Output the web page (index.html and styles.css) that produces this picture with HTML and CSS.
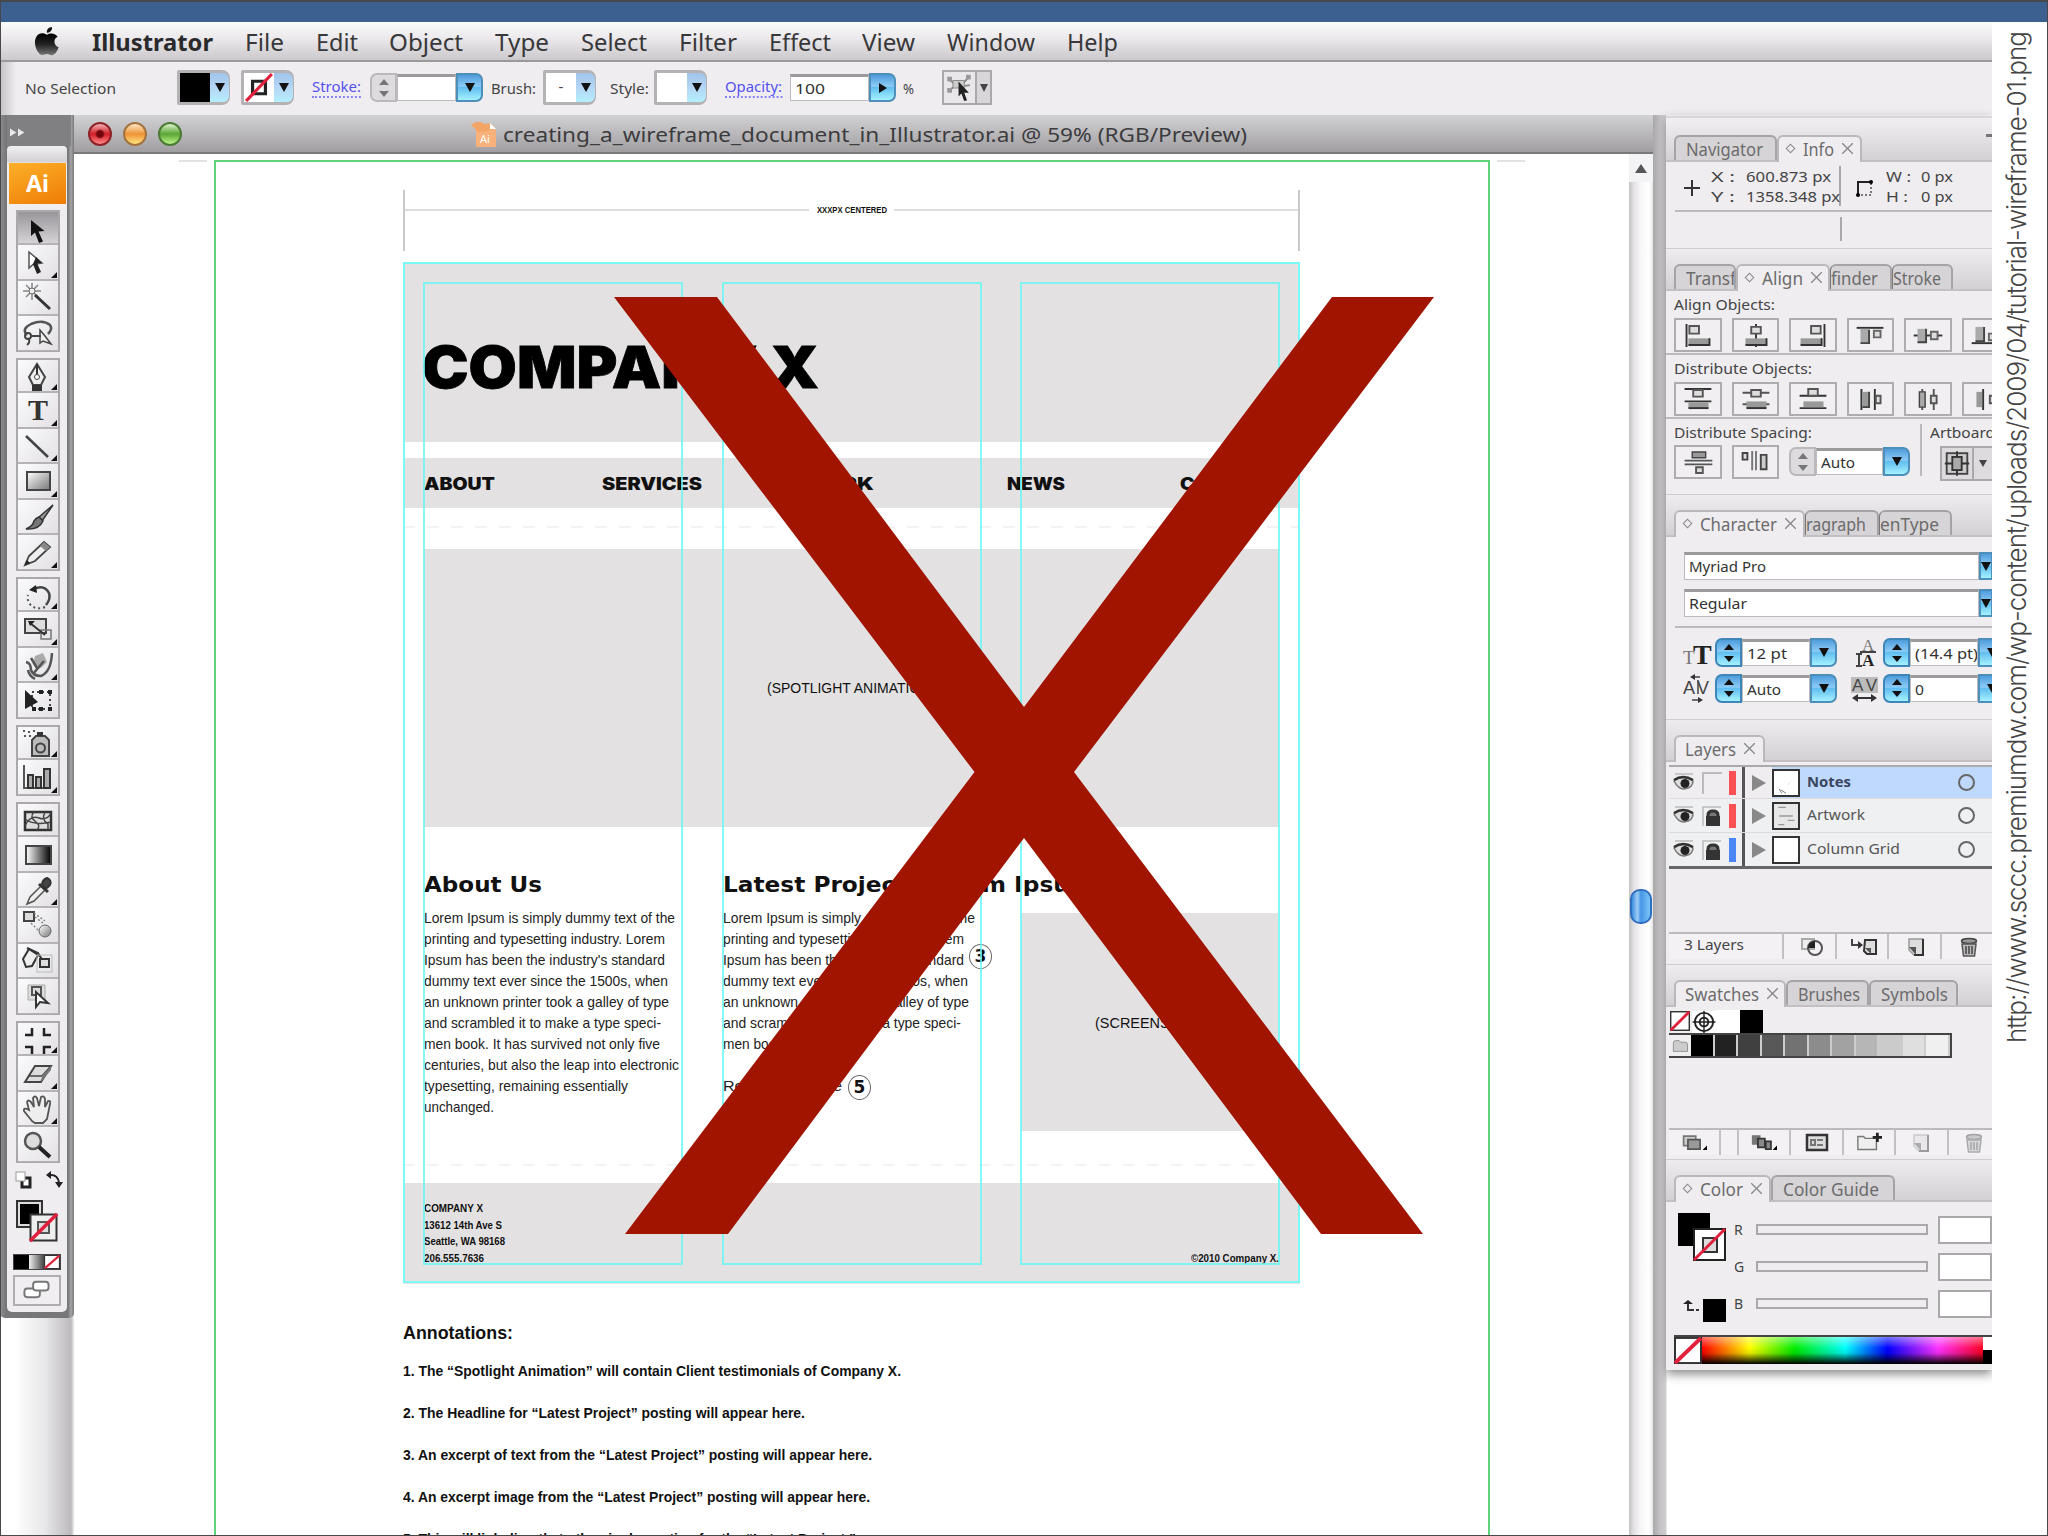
FILE: index.html
```html
<!DOCTYPE html>
<html lang="en-us">
<head>
  <meta charset="utf-8">
  <title>creating_a_wireframe_document_in_Illustrator.ai</title>
  <link rel="stylesheet" href="styles.css">
</head>
<body>
  <svg class="defs">
    <defs>
      <linearGradient id="metal" x1="0" y1="0" x2="1" y2="1"><stop offset="0" stop-color="#fff"/><stop offset="1" stop-color="#777"/></linearGradient>
      <linearGradient id="fade" x1="0" y1="0" x2="1" y2="0"><stop offset="0" stop-color="#fff"/><stop offset="1" stop-color="#000"/></linearGradient>
      <linearGradient id="apple" x1="0" y1="0" x2="0" y2="1"><stop offset="0" stop-color="#000"/><stop offset=".5" stop-color="#222"/><stop offset="1" stop-color="#777"/></linearGradient>
      <symbol id="none" viewBox="0 0 28 28" preserveAspectRatio="none"><path d="M8 8H20V20H8Z" fill="#fff" stroke="#222" stroke-width="3"/><path d="M2 27L26 1" stroke="#e0203c" stroke-width="3"/></symbol>
      <symbol id="slash" viewBox="0 0 28 28" preserveAspectRatio="none"><rect x="1" y="1" width="26" height="26" fill="#fff" stroke="#333" stroke-width="2"/><path d="M1 27L27 1" stroke="#e0203c" stroke-width="4"/></symbol>
      <symbol id="eye" viewBox="0 0 24 20"><path d="M2 1H20" stroke="#bbb" stroke-width="1.500"/><path d="M1 8Q10 1 20 8Q20 15 11 16Q5 16 1 8Z" fill="#ddd" stroke="#777" stroke-width="1.500"/><path d="M1 7Q10 1 20 7" fill="none" stroke="#333" stroke-width="2.500"/><circle cx="12" cy="10.500" r="4.500" fill="#222"/></symbol>
      <symbol id="lock" viewBox="0 0 20 22"><path d="M1 21V2H19" fill="none" stroke="#bbb" stroke-width="1.500"/><path d="M6 12V10Q6 6 11 6Q16 6 16 10V12" fill="#777" stroke="#333" stroke-width="3"/><rect x="4" y="11" width="14" height="10" fill="#333"/></symbol>
      <symbol id="page" viewBox="0 0 20 22"><path d="M3 3H17V19H8L3 14Z" fill="#ddd" stroke="#999" stroke-width="1.500"/><path d="M17 3V19H8" fill="none" stroke="#333" stroke-width="2"/><path d="M3 11H10V19Z" fill="#555"/></symbol>
      <symbol id="trash" viewBox="0 0 20 22"><ellipse cx="10" cy="5" rx="7.500" ry="2.500" fill="#999" stroke="#444" stroke-width="1.500"/><path d="M3 8H17L15.500 20H4.500Z" fill="#bbb" stroke="#555" stroke-width="1.500"/><path d="M7 10V18M10 10V18M13 10V18" stroke="#444" stroke-width="1.500"/></symbol>
    </defs>
  </svg>

  <div class="desktop"></div>
  <div class="main">
    <div class="app">
      <div class="menubar">
        <svg class="apple" viewBox="0 0 28 30"><path d="M14 8C11 6 6 5 3 10C-1 17 4 28 9 29C11 29 12 28 14 28C16 28 18 30 20 29C23 28 25 24 26 21C21 19 20 12 25 10C22 6 17 6 14 8Z" fill="url(#apple)"/><path d="M14 6C13 3 16 0 19 0C20 3 17 6 14 6Z" fill="#111"/></svg>
        <div class="menus">
          <b data-w="121">Illustrator</b><span data-w="39">File</span><span data-w="42">Edit</span><span data-w="74">Object</span><span data-w="54">Type</span><span data-w="66">Select</span><span data-w="58">Filter</span><span data-w="62">Effect</span><span data-w="53">View</span><span data-w="88">Window</span><span data-w="51">Help</span>
        </div>
      </div>

      <div class="controlbar">
        <span class="selection" data-w="91">No Selection</span>
        <div class="well"><i class="paint black"></i><i class="pop down"></i></div>
        <div class="well second"><svg class="paint"><use href="#none"/></svg><i class="pop down"></i></div>
        <a class="stroke-link" data-w="49">Stroke:</a>
        <div class="num"><i class="step gray"></i><i class="field"></i><i class="arrow down"></i></div>
        <span class="brush-label" data-w="45">Brush:</span>
        <div class="well brush"><i class="paint">-</i><i class="pop down"></i></div>
        <span class="style-label" data-w="39">Style:</span>
        <div class="well style"><i class="paint"></i><i class="pop down"></i></div>
        <a class="opacity-link" data-w="57">Opacity:</a>
        <div class="num opacity"><i class="field"><span data-w="30">100</span></i><i class="arrow right"></i></div>
        <span class="percent" data-w="11">%</span>
        <div class="selector">
          <svg viewBox="0 0 32 33"><path d="M4 7L10 12M26 5L20 12M4 20L10 16M27 14L20 15" stroke="#888" stroke-width="2"/><rect x="9" y="9" width="12" height="8" fill="#ccc" stroke="#888"/><path d="M3 5h5v5H3zM23 3h5v5h-5zM3 17h5v5H3z" fill="#999"/><path d="M15 10V26L18 23L21 31L24 30L21 22H26Z" fill="#222"/></svg>
          <i class="down"></i>
        </div>
      </div>

      <div class="work">
        <div class="toolcol">
          <div class="toolbox">
            <div class="toolhead"><svg viewBox="0 0 20 12"><path d="M0 1L8 6L0 11ZM10 1L18 6L10 11Z" fill="#e8e8e8"/></svg></div>
            <div class="toolbody">
              <div class="ai"><span data-w="23">Ai</span></div>
              <div class="tools">
                <div class="group">
                  <i class="tool on"><svg viewBox="0 0 42 35"><path d="M14 8V24L18 20.500L22 31L26 29.500L21.500 19.500L27.500 19Z" fill="#111"/></svg></i>
                  <i class="tool more"><svg viewBox="0 0 42 35"><path d="M12 7V23L16 19.500L25 18Z" fill="#fff" stroke="#555" stroke-width="1.500"/><path d="M16 19L20 29L24 27L20 18L25 18L19 12" fill="#222"/></svg></i>
                  <i class="tool"><svg viewBox="0 0 42 35"><path d="M15 2V19M6 10H24M9 4L21 16M9 16L21 4" stroke="#888" stroke-width="1.500"/><circle cx="15" cy="10" r="3" fill="#eee" stroke="#666"/><path d="M18 14L33 28" stroke="#333" stroke-width="3"/></svg></i>
                  <i class="tool"><svg viewBox="0 0 42 35"><path d="M10 19Q4 13 14 8Q26 3 33 9Q36 13 31 18" fill="none" stroke="#555" stroke-width="2.500"/><circle cx="11" cy="20" r="3" fill="none" stroke="#444" stroke-width="2"/><path d="M11 22Q14 26 10 29" fill="none" stroke="#444" stroke-width="2"/><path d="M23 14V27L26 25L34 28L28 20Z" fill="#eee" stroke="#444" stroke-width="1.500"/><path d="M13 20H24" stroke="#444" stroke-width="2"/></svg></i>
                </div>
                <div class="group">
                  <i class="tool more"><svg viewBox="0 0 42 35"><path d="M20 4L28 17L24 25H16L12 17Z" fill="#eee" stroke="#444" stroke-width="2"/><path d="M20 4V16" stroke="#333" stroke-width="2"/><circle cx="20" cy="17" r="2.500" fill="#fff" stroke="#444"/><path d="M15 25H25V31H15Z" fill="#333"/></svg></i>
                  <i class="tool more letter">T</i>
                  <i class="tool more"><svg viewBox="0 0 42 35"><path d="M9 7L31 28" stroke="#444" stroke-width="2.500"/></svg></i>
                  <i class="tool more"><svg viewBox="0 0 42 35"><rect x="10" y="8" width="23" height="18" fill="url(#metal)" stroke="#444" stroke-width="2"/></svg></i>
                  <i class="tool"><svg viewBox="0 0 42 35"><path d="M36 5L22 17L25 21Z" fill="#999" stroke="#333" stroke-width="1.500"/><path d="M22 17L26 21Q22 30 9 29Q16 26 17 21Q19 18 22 17Z" fill="#777" stroke="#333" stroke-width="1.500"/></svg></i>
                  <i class="tool more"><svg viewBox="0 0 42 35"><path d="M8 30L12 21L27 7L33 12L18 26Z" fill="#eee" stroke="#444" stroke-width="1.800"/><path d="M27 7L33 12L29 16L23 11Z" fill="#888"/><path d="M8 30L10 25L13 28Z" fill="#222"/></svg></i>
                </div>
                <div class="group">
                  <i class="tool more"><svg viewBox="0 0 42 35"><path d="M17 10Q27 5 32 14Q34 20 29 26" fill="none" stroke="#444" stroke-width="2.500"/><path d="M28 28Q18 32 12 24Q10 20 11 16" fill="none" stroke="#555" stroke-width="2" stroke-dasharray="2 3"/><path d="M12 11L19 6L20 14Z" fill="#222"/></svg></i>
                  <i class="tool more"><svg viewBox="0 0 42 35"><rect x="8" y="7" width="21" height="14" fill="#ddd" stroke="#444" stroke-width="2"/><path d="M24 18h10v9H24z" fill="none" stroke="#777" stroke-width="1.500"/><path d="M13 11L28 23" stroke="#333" stroke-width="2"/><path d="M11 9H18L13 14Z" fill="#222"/></svg></i>
                  <i class="tool more"><svg viewBox="0 0 42 35"><path d="M18 8L26 5L30 14L24 20L16 16Z" fill="#aaa"/><path d="M9 14Q14 15 14 22Q16 28 24 28Q34 24 35 5M11 22Q12 28 18 31M16 26L27 13M14 10L20 20" fill="none" stroke="#555" stroke-width="2.500"/></svg></i>
                  <i class="tool"><svg viewBox="0 0 42 35"><path d="M15 9H33V26H15Z" fill="none" stroke="#444" stroke-width="2" stroke-dasharray="2 3"/><path d="M8 7V26L21 19Z" fill="#222"/><path d="M31 7h4v4h-4zM31 24h4v4h-4zM15 24h4v4h-4zM22 7h4v4h-4zM22 24h4v4h-4z" fill="#222"/></svg></i>
                </div>
                <div class="group">
                  <i class="tool more"><svg viewBox="0 0 42 35"><path d="M15 13L19 9H28L32 13V29H15Z" fill="#bbb" stroke="#444" stroke-width="2"/><rect x="20" y="5" width="6" height="4" fill="#333"/><circle cx="23.500" cy="21" r="4.500" fill="none" stroke="#444" stroke-width="2"/><path d="M6 4h2M11 5h2M16 4h2M7 9h2M12 9h2" stroke="#555" stroke-width="2"/></svg></i>
                  <i class="tool more"><svg viewBox="0 0 42 35"><path d="M7 5V28H33" fill="none" stroke="#555" stroke-width="2"/><path d="M11 15h5v13h-5zM19 17h5v11h-5zM27 9h6v19h-6z" fill="#aaa" stroke="#333" stroke-width="2"/></svg></i>
                </div>
                <div class="group">
                  <i class="tool"><svg viewBox="0 0 42 35"><rect x="8" y="8" width="26" height="18" fill="#ddd" stroke="#333" stroke-width="2.500"/><path d="M8 22Q13 11 22 14Q30 17 34 9M17 8Q12 13 19 18Q24 22 20 26M28 8Q24 16 31 20V26M8 15Q18 22 34 18" fill="none" stroke="#444" stroke-width="1.500"/></svg></i>
                  <i class="tool"><svg viewBox="0 0 42 35"><rect x="9" y="9" width="25" height="18" fill="url(#fade)" stroke="#444" stroke-width="2"/></svg></i>
                  <i class="tool more"><svg viewBox="0 0 42 35"><path d="M10 31L13 24L24 13L28 17L17 28Z" fill="#eee" stroke="#555" stroke-width="1.500"/><path d="M22 11L31 19" stroke="#333" stroke-width="3"/><path d="M25 12Q25 7 30 5Q35 7 33 12Q30 16 28 15Z" fill="#444" stroke="#333" stroke-width="2"/></svg></i>
                  <i class="tool"><svg viewBox="0 0 42 35"><rect x="7" y="4" width="10" height="9" fill="#ddd" stroke="#444" stroke-width="2"/><path d="M17 5L28 13M18 9L26 15M14 15L23 24" stroke="#888" stroke-width="1.500" stroke-dasharray="2 2"/><ellipse cx="28" cy="23" rx="6" ry="6" fill="url(#metal)" stroke="#666"/></svg></i>
                  <i class="tool"><svg viewBox="0 0 42 35"><path d="M6 15L12 5L21 11L15 22L9 23Z" fill="#eee" stroke="#333" stroke-width="2"/><path d="M10 4L21 9L26 17" fill="none" stroke="#333" stroke-width="2"/><rect x="20" y="11" width="15" height="17" fill="none" stroke="#bbb"/><rect x="23" y="15" width="9" height="8" fill="#ddd" stroke="#333" stroke-width="2"/></svg></i>
                  <i class="tool"><svg viewBox="0 0 42 35"><path d="M11 6h17v15H11z" fill="#ddd" stroke="#aaa"/><rect x="15" y="8" width="9" height="8" fill="none" stroke="#555" stroke-width="2"/><path d="M19 13V28L23 23L31 24Z" fill="#fff" stroke="#333" stroke-width="2"/></svg></i>
                </div>
                <div class="group">
                  <i class="tool more"><svg viewBox="0 0 42 35"><path d="M15 5V12H8M27 5V12H34M15 31V24H8M27 31V24H34" fill="none" stroke="#222" stroke-width="2.500"/></svg></i>
                  <i class="tool more"><svg viewBox="0 0 42 35"><path d="M8 26L18 10H34L24 26Z" fill="#ddd" stroke="#444" stroke-width="2"/><path d="M11 20H25L34 10" fill="none" stroke="#444" stroke-width="1.500"/><path d="M25 20L34 10V14L24 26Z" fill="#777"/></svg></i>
                  <i class="tool more"><svg viewBox="0 0 42 35"><path d="M15 29L7 19Q6 15 12 18L10 10Q11 7 14 10L17 15L16 6Q18 3 20 6L22 14L24 5Q27 3 28 7V15L31 9Q34 8 33 12L30 27L26 31H18Z" fill="#eee" stroke="#555" stroke-width="1.800"/></svg></i>
                  <i class="tool"><svg viewBox="0 0 42 35"><circle cx="16" cy="14" r="8" fill="#ddd" stroke="#555" stroke-width="2.500"/><path d="M22 20L33 30" stroke="#222" stroke-width="4"/></svg></i>
                </div>
              </div>
              <div class="swaps">
                <svg viewBox="0 0 17 17"><path d="M7 7h8v9H7z" fill="#fff" stroke="#222" stroke-width="3"/><rect x="1" y="1" width="9" height="9" fill="#fff" stroke="#999"/></svg>
                <svg viewBox="0 0 17 17"><path d="M3 4Q12 3 13 12" fill="none" stroke="#222" stroke-width="2"/><path d="M0 4L5 0V8ZM9 11H17L13 17Z" fill="#222"/></svg>
              </div>
              <svg class="fillstroke" viewBox="0 0 42 42"><rect x="1" y="1" width="25" height="26" fill="#ddd" stroke="#333" stroke-width="2"/><rect x="4" y="4" width="19" height="20" fill="#000"/><rect x="14.500" y="14.500" width="26" height="26" fill="#eee" stroke="#333" stroke-width="2"/><rect x="22" y="22" width="11" height="11" fill="#ddd" stroke="#555" stroke-width="2"/><path d="M14 41L41 14" stroke="#e0203c" stroke-width="3.500"/></svg>
              <div class="modes"><i></i><i></i><svg><use href="#slash"/></svg></div>
              <div class="screenmode"><svg viewBox="0 0 42 28"><rect x="9" y="12" width="16" height="9" rx="3" fill="#fff" stroke="#777" stroke-width="2"/><rect x="18" y="5" width="16" height="9" rx="3" fill="#fff" stroke="#777" stroke-width="2"/></svg></div>
            </div>
          </div>
        </div>

        <div class="docwin">
          <div class="titlebar">
            <i class="light red"></i><i class="light amber"></i><i class="light green"></i>
            <svg class="docicon" viewBox="0 0 28 28"><path d="M6 5H20L26 10V27H6Z" fill="#f6b27a"/><path d="M1 5Q8 -1 14 4Q22 2 24 7L18 11L8 12Z" fill="#f2a566"/><path d="M20 3L26 9H20Z" fill="#fff"/><text x="10" y="23" font-size="11">Ai</text></svg>
            <span data-w="744">creating_a_wireframe_document_in_Illustrator.ai @ 59% (RGB/Preview)</span>
          </div>
          <div class="docbody">
            <div class="canvas">
              <div class="artboard">
                <div class="measure"><i></i><b data-w="70">XXXPX CENTERED</b><i></i></div>
                <div class="wireframe">
                  <div class="wf-header"><h1 data-w="397">COMPANY X</h1></div>
                  <div class="wf-nav"><b data-w="71">ABOUT</b><b data-w="100">SERVICES</b><b data-w="72">WORK</b><b data-w="58">NEWS</b><b data-w="99">CONTACT</b></div>
                  <div class="wf-rule"></div>
                  <div class="wf-spot"><span data-w="168">(SPOTLIGHT ANIMATION)</span></div>
                  <div class="wf-content">
                    <div>
                      <h2 data-w="118">About Us</h2>
                      <p><span data-w="251">Lorem Ipsum is simply dummy text of the</span><span data-w="241">printing and typesetting industry. Lorem</span><span data-w="241">Ipsum has been the industry's standard</span><span data-w="244">dummy text ever since the 1500s, when</span><span data-w="245">an unknown printer took a galley of type</span><span data-w="237">and scrambled it to make a type speci-</span><span data-w="236">men book. It has survived not only five</span><span data-w="255">centuries, but also the leap into electronic</span><span data-w="204">typesetting, remaining essentially</span><span data-w="70">unchanged.</span></p>
                    </div>
                    <div>
                      <h2 data-w="371">Latest Project: Lorem Ipsum</h2>
                      <p><span data-w="252">Lorem Ipsum is simply dummy text of the</span><span data-w="241">printing and typesetting industry. Lorem</span><span data-w="241">Ipsum has been the industry's standard</span><span data-w="245">dummy text ever since the 1500s, when</span><span data-w="246">an unknown printer took a galley of type</span><span data-w="238">and scrambled it to make a type speci-</span><span data-w="64">men book.</span><span class="readmore" data-w="119">Read More Here</span></p>
                      <em class="note three">3</em><em class="note five">5</em>
                    </div>
                    <div class="wf-shot"><span data-w="110">(SCREENSHOT)</span></div>
                  </div>
                  <div class="wf-rule low"></div>
                  <div class="wf-footer">
                    <address><b data-w="59">COMPANY X</b><b data-w="78">13612 14th Ave S</b><b data-w="81">Seattle, WA 98168</b><b data-w="60">206.555.7636</b></address>
                    <b data-w="88">©2010 Company X.</b>
                  </div>
                  <div class="colgrid"><i></i><i></i><i></i></div>
                </div>
                <div class="notes">
                  <h3 data-w="110">Annotations:</h3>
                  <b data-w="498">1. The “Spotlight Animation” will contain Client testimonials of Company X.</b>
                  <b data-w="402">2. The Headline for “Latest Project” posting will appear here.</b>
                  <b data-w="469">3. An excerpt of text from the “Latest Project” posting will appear here.</b>
                  <b data-w="467">4. An excerpt image from the “Latest Project” posting will appear here.</b>
                  <b data-w="453">5. This will link directly to the single posting for the “Latest Project.”</b>
                </div>
              </div>
            </div>
            <div class="scroll"><i class="up"></i><i class="thumb"></i></div>
          </div>
        </div>

        <div class="dock">
          <div class="panels">
            <section class="info">
              <div class="tabs"><span class="w103"><u data-w="77">Navigator</u></span><span class="on w85"><s></s><u data-w="31">Info</u><q></q></span><i class="min"></i></div>
              <div class="inforow">
                <svg class="plus" viewBox="0 0 16 16"><path d="M8 0V16M0 8H16" stroke="#333" stroke-width="2"/></svg>
                <div class="xy"><span data-w="24">X :</span><span data-w="85">600.873 px</span><span data-w="24">Y :</span><span data-w="94">1358.348 px</span></div>
                <svg class="whicon" viewBox="0 0 18 18"><path d="M2 17V3H15" fill="none" stroke="#222" stroke-width="2"/><path d="M15 4V16H4" fill="none" stroke="#777" stroke-width="2" stroke-dasharray="2 2"/><circle cx="2" cy="16" r="2"/><circle cx="15" cy="3" r="2"/></svg>
                <div class="xy wh"><span data-w="25">W :</span><span data-w="32">0 px</span><span data-w="22">H :</span><span data-w="32">0 px</span></div>
              </div>
              <div class="infomore"></div>
            </section>

            <section class="align">
              <div class="tabs"><span class="w62"><u data-w="50">Transf</u></span><span class="on w94"><s></s><u data-w="41">Align</u><q></q></span><span class="w62 cut"><u data-w="47">finder</u></span><span class="w61 cut"><u data-w="48">Stroke</u></span></div>
              <label data-w="101">Align Objects:</label>
              <div class="btns">
                <i><svg viewBox="0 0 46 32"><path d="M11 4V28" stroke="#333" stroke-width="2"/><path d="M14 6h10v8H14z" fill="#ddd" stroke="#555" stroke-width="2"/><path d="M13 19h22v7H13z" fill="#999"/><path d="M13 26H35V19" fill="none" stroke="#333" stroke-width="2"/></svg></i>
                <i><svg viewBox="0 0 46 32"><path d="M23 4V28" stroke="#333" stroke-width="2"/><path d="M18 7h10v7H18z" fill="#ddd" stroke="#555" stroke-width="2"/><path d="M12 19h22v7H12z" fill="#999"/><path d="M12 26H34V19" fill="none" stroke="#333" stroke-width="2"/></svg></i>
                <i><svg viewBox="0 0 46 32"><path d="M35 4V28" stroke="#333" stroke-width="2"/><path d="M21 6h10v8H21z" fill="#ddd" stroke="#555" stroke-width="2"/><path d="M10 19h22v7H10z" fill="#999"/><path d="M10 26H32V19" fill="none" stroke="#333" stroke-width="2"/></svg></i>
                <i><svg viewBox="0 0 46 32"><path d="M8 8H36" stroke="#333" stroke-width="2"/><path d="M12 9h9v15h-9z" fill="#aaa"/><path d="M12 24H21V10" fill="none" stroke="#444" stroke-width="2"/><path d="M26 11h7v7h-7z" fill="#ddd" stroke="#666" stroke-width="2"/></svg></i>
                <i><svg viewBox="0 0 46 32"><path d="M8 16H38" stroke="#333" stroke-width="2"/><path d="M12 9h9v14h-9z" fill="#aaa"/><path d="M12 23H21V9" fill="none" stroke="#444" stroke-width="2"/><path d="M26 12h7v8h-7z" fill="#ddd" stroke="#666" stroke-width="2"/></svg></i>
                <i><svg viewBox="0 0 46 32"><path d="M8 24H36" stroke="#333" stroke-width="2"/><path d="M12 7h9v15h-9z" fill="#aaa"/><path d="M12 22H21V7" fill="none" stroke="#444" stroke-width="2"/><path d="M26 14h7v7h-7z" fill="#ddd" stroke="#666" stroke-width="2"/></svg></i>
              </div>
              <label data-w="138">Distribute Objects:</label>
              <div class="btns">
                <i><svg viewBox="0 0 46 32"><path d="M9 5H37M9 18H37" stroke="#333" stroke-width="2"/><path d="M18 6h10v7H18z" fill="#ddd" stroke="#555" stroke-width="2"/><path d="M13 19h21v6H13z" fill="#999"/><path d="M13 25H34" stroke="#333" stroke-width="2"/></svg></i>
                <i><svg viewBox="0 0 46 32"><path d="M9 9H37M9 21H37" stroke="#555" stroke-width="2"/><path d="M18 6h10v7H18z" fill="#ddd" stroke="#555" stroke-width="2"/><path d="M13 18h21v7H13z" fill="#999"/><path d="M13 25H34" stroke="#333" stroke-width="2"/></svg></i>
                <i><svg viewBox="0 0 46 32"><path d="M9 12H37M9 25H37" stroke="#333" stroke-width="2"/><path d="M18 5h10v7H18z" fill="#ddd" stroke="#555" stroke-width="2"/><path d="M13 18h21v6H13z" fill="#999"/></svg></i>
                <i><svg viewBox="0 0 46 32"><path d="M13 5V27M27 5V27" stroke="#333" stroke-width="2"/><path d="M14 8h7v16h-7z" fill="#999"/><path d="M14 24H21V8" fill="none" stroke="#444" stroke-width="2"/><path d="M28 12h5v8h-5z" fill="#ddd" stroke="#555" stroke-width="2"/></svg></i>
                <i><svg viewBox="0 0 46 32"><path d="M17 5V27M29 5V27" stroke="#555" stroke-width="2"/><path d="M14 8h6v16h-6z" fill="#aaa" stroke="#444" stroke-width="1.500"/><path d="M26 12h6v8h-6z" fill="#ddd" stroke="#555" stroke-width="2"/></svg></i>
                <i><svg viewBox="0 0 46 32"><path d="M20 5V27M34 5V27" stroke="#333" stroke-width="2"/><path d="M13 8h6v16h-6z" fill="#999"/><path d="M27 12h5v8h-5z" fill="#ddd" stroke="#555" stroke-width="2"/></svg></i>
              </div>
              <div class="spacing">
                <div>
                  <label data-w="138">Distribute Spacing:</label>
                  <div class="btns">
                    <i><svg viewBox="0 0 46 32"><path d="M9 14H38M9 18H38" stroke="#555" stroke-width="2"/><path d="M17 5h14v6H17z" fill="#999" stroke="#444" stroke-width="1.500"/><path d="M21 21h7v6h-7z" fill="#ddd" stroke="#555" stroke-width="2"/></svg></i>
                    <i><svg viewBox="0 0 46 32"><path d="M19 4V24M23 4V24" stroke="#777" stroke-width="2"/><path d="M9 6h5v7H9z" fill="#ddd" stroke="#444" stroke-width="2"/><path d="M28 8h6v15h-6z" fill="#ccc" stroke="#444" stroke-width="2"/></svg></i>
                    <div class="num"><i class="step gray"></i><i class="field"><span data-w="34">Auto</span></i><i class="arrow down"></i></div>
                  </div>
                </div>
                <div class="toartboard">
                  <label data-w="65">Artboard</label>
                  <div><svg viewBox="0 0 32 32"><rect x="5" y="5" width="22" height="22" fill="#ccc" stroke="#444" stroke-width="2"/><rect x="11" y="9" width="10" height="14" fill="#aaa" stroke="#333" stroke-width="2"/><path d="M16 3V9M16 23V29M3 16H11M21 16H29" stroke="#333" stroke-width="2"/></svg><i class="down"></i></div>
                </div>
              </div>
            </section>

            <section class="character">
              <div class="tabs"><span class="on w131"><s></s><u data-w="77">Character</u><q></q></span><span class="w74 cut"><u data-w="60">ragraph</u></span><span class="w73 cut"><u data-w="59">enType</u></span></div>
              <div class="font"><i class="field"><span data-w="77">Myriad Pro</span></i><i class="arrow down"></i></div>
              <div class="font"><i class="field"><span data-w="58">Regular</span></i><i class="arrow down"></i></div>
              <div class="metrics">
                <svg viewBox="0 0 30 30"><text x="10" y="26" font-size="28" font-weight="bold">T</text><text x="0" y="26" font-size="19" fill="#777">T</text></svg>
                <div class="num"><i class="step"></i><i class="field"><span data-w="40">12 pt</span></i><i class="arrow down"></i></div>
                <svg viewBox="0 0 30 30"><text x="10" y="13" font-size="17" fill="#777">A</text><text x="10" y="28" font-size="17" font-weight="bold">A</text><path d="M7 16V28M4 16H10M4 28H10M8 14H24" stroke="#444" stroke-width="2"/></svg>
                <div class="num"><i class="step"></i><i class="field"><span data-w="63">(14.4 pt)</span></i><i class="arrow down"></i></div>
                <svg viewBox="0 0 30 30"><text class="sans" x="0" y="20" font-size="18" textLength="26">AV</text><path d="M15 6V20M10 3H17M9 26H17" stroke="#444" stroke-width="1.500"/><path d="M7 3l5-3v6zM20 26l-5-3v6z" fill="#333"/></svg>
                <div class="num"><i class="step"></i><i class="field"><span data-w="34">Auto</span></i><i class="arrow down"></i></div>
                <svg viewBox="0 0 30 30"><rect x="-1" y="3" width="27" height="16" fill="#bbb"/><text class="sans" x="0" y="17" font-size="17" textLength="25">AV</text><path d="M4 24H22" stroke="#333" stroke-width="2"/><path d="M0 24l6-4v8zM25 24l-6-4v8z" fill="#333"/></svg>
                <div class="num"><i class="step"></i><i class="field"><span data-w="9">0</span></i><i class="arrow down"></i></div>
              </div>
            </section>

            <section class="layers">
              <div class="tabs"><span class="on w91"><u data-w="51">Layers</u><q></q></span></div>
              <div class="layer on"><svg class="eye"><use href="#eye"/></svg><i class="nolock"></i><b></b><em></em><svg class="thumb" viewBox="0 0 28 28"><path d="M6 21L9 26M8 22L14 26" stroke="#666"/><path d="M16 16L20 12" stroke="#ddd"/></svg><span data-w="44">Notes</span><u></u></div>
              <div class="layer"><svg class="eye"><use href="#eye"/></svg><svg class="lock"><use href="#lock"/></svg><b></b><em></em><svg class="thumb" viewBox="0 0 28 28"><rect width="28" height="28" fill="#e8e8e8"/><path d="M5 4H14M6 14H22M16 19H24M5 24H12" stroke="#999" stroke-width="1.500"/></svg><span data-w="58">Artwork</span><u></u></div>
              <div class="layer blue"><svg class="eye"><use href="#eye"/></svg><svg class="lock"><use href="#lock"/></svg><b></b><em></em><svg class="thumb" viewBox="0 0 28 28"></svg><span data-w="93">Column Grid</span><u></u></div>
              <div class="foot">
                <span><u data-w="60">3 Layers</u></span>
                <i><svg viewBox="0 0 26 22"><rect x="3" y="3" width="12" height="10" fill="#eee" stroke="#aaa" stroke-width="2"/><circle cx="16" cy="12" r="7" fill="none" stroke="#555" stroke-width="2"/><path d="M9 12H16V5Q9 6 9 12Z" fill="#222"/></svg></i>
                <i><svg viewBox="0 0 26 22"><path d="M1 3V9H8" fill="none" stroke="#444" stroke-width="2"/><path d="M7 5L12 9L7 13Z" fill="#333"/><path d="M14 4H25V18H16L13 15Z" fill="#ddd" stroke="#333" stroke-width="2"/><path d="M14 12H20V18Z" fill="#555"/></svg></i>
                <i><svg><use href="#page"/></svg></i>
                <i><svg><use href="#trash"/></svg></i>
              </div>
            </section>

            <section class="swatches">
              <div class="tabs"><span class="on w112"><u data-w="74">Swatches</u><q></q></span><span class="w83"><u data-w="62">Brushes</u></span><span class="w89"><u data-w="67">Symbols</u></span></div>
              <div class="sw top"><svg><use href="#slash"/></svg><svg viewBox="0 0 24 23"><circle cx="12" cy="11.500" r="9.500" fill="none" stroke="#222" stroke-width="2"/><circle cx="12" cy="11.500" r="4.500" fill="none" stroke="#222" stroke-width="2"/><path d="M12 0V23M0 11.500H24" stroke="#222" stroke-width="1.500"/></svg><i class="white"></i><i class="g0"></i></div>
              <div class="sw grays"><svg viewBox="0 0 24 21"><path d="M4 7Q4 4 7 4H11L13 6H19Q21 6 21 9V17H4Z" fill="#ccc" stroke="#888"/></svg><i class="g0"></i><i class="g1"></i><i class="g2"></i><i class="g3"></i><i class="g4"></i><i class="g5"></i><i class="g6"></i><i class="g7"></i><i class="g8"></i><i class="g9"></i><i class="g10"></i></div>
              <div class="foot">
                <i class="first"><svg viewBox="0 0 30 22"><path d="M3 3h14v11H3z" fill="#ccc" stroke="#777" stroke-width="2"/><path d="M8 7h14v11H8z" fill="#999" stroke="#555" stroke-width="2"/><path d="M30 14V19H25Z"/></svg></i>
                <i class="gap"></i>
                <i><svg viewBox="0 0 30 22"><path d="M1 2h10v11H1z" fill="#777"/><path d="M8 6h8v10H8zM17 9h6v9h-6z" fill="#888" stroke="#333" stroke-width="2"/><path d="M30 14V19H25Z"/></svg></i>
                <i><svg viewBox="0 0 26 22"><rect x="3" y="3" width="20" height="15" fill="#ddd" stroke="#333" stroke-width="2.500"/><path d="M7 8h4v5H7zM13 8h6M13 13h6" fill="none" stroke="#777" stroke-width="2"/></svg></i>
                <i><svg viewBox="0 0 28 22"><path d="M2 18V4H8L10 6H22V18Z" fill="#eee" stroke="#777" stroke-width="1.500"/><path d="M23 0V10M18 5H28" stroke="#222" stroke-width="3"/></svg></i>
                <i class="dim"><svg><use href="#page"/></svg></i>
                <i class="dim"><svg><use href="#trash"/></svg></i>
              </div>
            </section>

            <section class="color">
              <div class="tabs"><span class="on w97"><s></s><u data-w="43">Color</u><q></q></span><span class="w124"><u data-w="96">Color Guide</u></span></div>
              <div class="mixer">
                <svg class="chips" viewBox="0 0 50 112"><rect x="0" y="0" width="32" height="33" fill="#000"/><rect x="16" y="16" width="31" height="31" fill="#fff" stroke="#222" stroke-width="2"/><rect x="25" y="25" width="14" height="14" fill="#ddd" stroke="#333" stroke-width="2"/><path d="M16 47L47 16" stroke="#e0203c" stroke-width="3"/><rect x="25" y="86" width="23" height="23" fill="#000"/><path d="M10 89V97H16M18 97H21" fill="none" stroke="#333" stroke-width="2"/><path d="M5 91L10 87L15 91Z" fill="#222"/></svg>
                <div class="sliders">
                  <b>R</b><i></i><em></em>
                  <b>G</b><i></i><em></em>
                  <b>B</b><i></i><em></em>
                </div>
              </div>
              <div class="spectrum"><svg><use href="#slash"/></svg><i></i><b></b></div>
            </section>
          </div>
        </div>
      </div>
    </div>

    <div class="source"><span data-h="1011">http://www.sccc.premiumdw.com/wp-content/uploads/2009/04/tutorial-wireframe-01.png</span></div>
  </div>

  <svg class="cross" viewBox="0 0 2048 1536"><path d="M614 297H717L1024 707L1332 297H1434L1074 772L1423 1234H1321L1024 838L728 1234H625L974.500 772Z"/></svg>
  <div class="frame"></div>

  <script>
  // scale each label to its width in the window, the margin takes up the difference
  document.querySelectorAll('[data-w]').forEach(function(el){
    el.style.display='inline-block';
    el.style.width='max-content';
    var w=Number(el.dataset.w);
    var natural=el.getBoundingClientRect().width;
    var margin=parseFloat(getComputedStyle(el).marginRight);
    el.style.width=natural+'px';
    el.style.marginRight=(margin+w-natural)+'px';
    el.style.transform='scaleX('+w/natural+')';
    el.style.transformOrigin='0 50%';
  });
  document.querySelectorAll('[data-h]').forEach(function(el){
    el.style.letterSpacing=(el.dataset.h-el.getBoundingClientRect().height)/el.textContent.length+'px';
  });
  </script>
</body>
</html>
```
FILE: styles.css
```css
* {
  box-sizing: border-box;
}
body {
  margin: 0;
  width: 2048px;
  height: 1536px;
  overflow: hidden;
  position: relative;
  background: #fff;
  font-family: "Noto Sans", "Open Sans", sans-serif;
  font-size: 15px;
  color: #444;
}
i, em {
  font-style: normal;
}
u, s, a {
  text-decoration: none;
}
q::before, q::after {
  content: none;
}
h1, h2, h3, p {
  margin: 0;
}
[data-w], [data-h] {
  white-space: nowrap;
  flex: none;
}
svg {
  display: block;
  overflow: visible;
  flex: none;
}
.defs {
  width: 0;
  height: 0;
  position: absolute;
}
.frame {
  position: absolute;
  inset: 0;
  border: 1px solid #48484a;
  border-top-width: 2px;
}
.cross {
  position: absolute;
  left: 0;
  top: 0;
  width: 2048px;
  height: 1536px;
  fill: #a11400;
}
.desktop {
  height: 22px;
  background: #3c608f;
}
.main {
  display: flex;
  height: 1514px;
}
.app {
  width: 1992px;
  overflow: hidden;
}

/* menu bar */
.menubar {
  height: 40px;
  display: flex;
  align-items: center;
  padding-left: 33px;
  background: linear-gradient(#fbfbfb, #eceaec 40%, #cbc9cb);
  border-bottom: 2px solid #9b999b;
  font-size: 24px;
  color: #38383a;
}
.apple {
  width: 28px;
  height: 29px;
  margin-right: 31px;
}
.menus {
  display: flex;
  gap: 31.800px;
  line-height: 36px;
  padding-top: 2px;
}
.menus b {
  color: #2a2a2c;
}

/* control bar */
.controlbar {
  height: 53px;
  display: flex;
  align-items: center;
  padding: 0 0 2px 25px;
  background: linear-gradient(90deg, #c4c2c5, #efedf0 16px);
}
.controlbar a {
  color: #5551ee;
  border-bottom: 2px dotted #8583f3;
  line-height: 19px;
}
.selection {
  margin-right: 61px;
}
.well {
  display: flex;
  flex: none;
  width: 53px;
  height: 35px;
  border: 3px solid #b4b2b5;
  border-radius: 2px 8px 8px 2px;
  background: #fff;
  margin-right: 11px;
}
.well .paint {
  width: 30px;
  height: 29px;
  text-align: center;
  line-height: 26px;
}
.well.second {
  margin-right: 18px;
}
.black {
  background: #000;
}
.pop {
  flex: 1;
  border-radius: 0 6px 6px 0;
  background: linear-gradient(#9fc4ea, #b5d6f5 50%, #b4eefe);
  margin-right: -2px;
}
.down, .right {
  display: flex;
  align-items: center;
  justify-content: center;
}
.down::after {
  content: "";
  border: 5px solid transparent;
  border-top: 9px solid #111;
  border-bottom: 0;
}
.right::after {
  content: "";
  border: 5px solid transparent;
  border-left: 8px solid #111;
  border-right: 0;
}
.num {
  display: flex;
  flex: none;
  width: 113px;
  height: 29px;
}
.controlbar .num {
  margin: 0 8px 0 9px;
}
.field {
  flex: 1;
  background: #fff;
  border: 1px solid #bdbbbd;
  border-top: 3px solid #9c9a9d;
  line-height: 22px;
  padding-left: 4px;
  color: #333;
  overflow: hidden;
}
.num .field {
  margin: 1px 0;
}
.arrow {
  width: 27px;
  border: 2px solid #4d8fb8;
  border-radius: 0 7px 7px 0;
  background: linear-gradient(#4f9cdc, #8ccbf6 45%, #62bdf0 50%, #a4f2ff);
}
.step {
  width: 27px;
  border: 2px solid #3f86b8;
  border-radius: 7px 0 0 7px;
  background: linear-gradient(#4f9cdc, #8ccbf6 45%, #62bdf0 50%, #a4f2ff);
  display: flex;
  flex-direction: column;
  align-items: center;
  justify-content: center;
  gap: 6px;
}
.step::before, .step::after {
  content: "";
  border: 5px solid transparent;
  border-bottom: 6px solid #111;
  border-top: 0;
}
.step::after {
  border-bottom: 0;
  border-top: 6px solid #111;
}
.step.gray {
  background: #dddbde;
  border-color: #bab8bb;
}
.step.gray::before {
  border-bottom-color: #777;
}
.step.gray::after {
  border-top-color: #777;
}
.brush-label {
  margin-right: 7px;
}
.well.brush {
  margin-right: 14px;
}
.style-label {
  margin-right: 5px;
}
.well.style {
  margin-right: 18px;
}
.controlbar .num.opacity {
  width: 106px;
  margin: 0 7px 0 8px;
}
.selector {
  display: flex;
  width: 50px;
  height: 35px;
  margin-left: 28px;
  border: 2px solid #aaa8ab;
  background: #e9e7ea;
}
.selector svg {
  width: 31px;
  height: 31px;
}
.selector i {
  flex: 1;
  border-left: 2px solid #aaa8ab;
  background: #d8d6d9;
}
.selector .down::after {
  border-width: 8px 4px 0;
  border-top-color: #444;
}

/* tool box */
.work {
  display: flex;
  height: 1421px;
}
.toolcol {
  width: 74px;
  background: linear-gradient(90deg, #fff 20%, #e8e7e9 60%, #bcbabd 96%, #eee);
}
.toolbox {
  height: 1203px;
  padding: 0 7px 6px;
  background: linear-gradient(90deg, #8f8f91, #77777a 6px, #77777a 68px, #a5a5a7 71px, #77777a);
  border-radius: 0 0 5px 5px;
}
.toolhead {
  height: 31px;
  padding: 12px 0 0 3px;
  margin-right: -4px;
  background: #808083;
}
.toolhead svg {
  width: 16px;
  height: 11px;
}
.toolbody {
  height: 1166px;
  padding: 17px 2px 0;
  border-radius: 4px 4px 5px 5px;
  background: linear-gradient(#f0eff1, #d2d0d3 16px, #efedf0 17px);
}
.ai {
  width: 57px;
  height: 41px;
  margin: 0 0 6px;
  background: linear-gradient(160deg, #fdb02a, #ee7c05);
  font-weight: bold;
  font-size: 24px;
  line-height: 39px;
  text-align: center;
  color: #fff;
}
.tools {
  display: flex;
  flex-direction: column;
  gap: 6px;
  width: 44px;
  margin-left: 7px;
  height: 953px;
}
.group {
  flex: none;
  border: 2px solid #aaa8ab;
  border-bottom-width: 1px;
}
.tool {
  display: flex;
  position: relative;
  height: 35.500px;
  border-bottom: 2px solid #b5b3b6;
  background: linear-gradient(135deg, #fbfafc, #e2e0e3);
}
.group .tool:first-child {
  height: 33px;
}
.group .tool:last-child {
  height: 35px;
  border-bottom: 1px solid #b5b3b6;
}
.tool svg {
  width: 42px;
  height: 35px;
  margin: 0 -1px;
}
.tool.on {
  background: linear-gradient(#98969a, #d5d3d6);
}
.tool.more::after {
  content: "";
  position: absolute;
  right: 1px;
  bottom: 1px;
  border: 3px solid transparent;
  border-right-color: #111;
  border-bottom-color: #111;
}
.tool.letter {
  justify-content: center;
  font: bold 30px/34px "Liberation Serif", serif;
  color: #333;
}
.swaps {
  display: flex;
  justify-content: space-between;
  padding: 8px 2px 0 6px;
}
.swaps svg {
  width: 17px;
  height: 17px;
}
.fillstroke {
  width: 42px;
  height: 42px;
  margin: 12px 0 12px 7px;
}
.modes {
  display: flex;
  width: 48px;
  height: 16px;
  margin-left: 4px;
  border: 1px solid #444;
}
.modes i {
  flex: 1;
  background: #000;
}
.modes i + i {
  background: linear-gradient(90deg, #eee, #444);
}
.modes svg {
  width: 16px;
  height: 14px;
}
.screenmode {
  width: 48px;
  height: 31px;
  margin: 5px 0 0 4px;
  border: 2px solid #b0aeb1;
  background: #f0eef1;
}
.screenmode svg {
  width: 42px;
  height: 27px;
}

/* document window */
.docwin {
  width: 1579px;
}
.titlebar {
  display: flex;
  align-items: center;
  height: 39px;
  padding-left: 14px;
  background: linear-gradient(#d2d1d3, #a09ea1);
  border-bottom: 2px solid #7a787b;
  font-size: 20.500px;
  color: #3c3c3e;
}
.light {
  width: 24px;
  height: 24px;
  margin-right: 11px;
  border-radius: 50%;
  border: 2px solid #555;
}
.light.red {
  background: radial-gradient(circle at 50% 50%, #70060c 3px, transparent 5px), linear-gradient(#f2b4b4, #d01c28 50%, #ff8a8a);
  border-color: #8e2226;
}
.light.amber {
  background: linear-gradient(#fde6c4, #ee9436 50%, #ffe683);
  border-color: #a4723e;
}
.light.green {
  background: linear-gradient(#dcf2cc, #5aa634 50%, #bdf58a);
  border-color: #4a7a34;
}
.docicon {
  width: 28px;
  height: 28px;
  margin: 0 5px 0 277px;
  fill: #fff;
}
.docbody {
  display: flex;
  height: 1382px;
}
.canvas {
  width: 1555px;
  background: #fff;
  overflow: hidden;
  padding: 6px 0 0 140px;
}
.canvas::before, .canvas::after {
  content: "";
  position: absolute;
  left: 179px;
  top: 160px;
  width: 28px;
  height: 2px;
  background: #e2e2e2;
}
.canvas::after {
  left: 1497px;
}
.scroll {
  width: 24px;
  background: linear-gradient(90deg, #c3c1c4, #e4e2e5 5px, #f7f6f8 12px, #fff 20px, #e5e4e6);
}
.scroll .up {
  display: flex;
  justify-content: center;
  height: 28px;
  background: #f3f2f4;
  padding-top: 10px;
}
.scroll .up::after {
  content: "";
  height: 0;
  border: 6px solid transparent;
  border-bottom: 9px solid #555;
  border-top: 0;
}
.scroll .thumb {
  display: block;
  width: 22px;
  height: 35px;
  margin: 707px 0 0 1px;
  border-radius: 10px;
  border: 2px solid #2f6fc0;
  background: linear-gradient(90deg, #3d8fe0, #9ccbf6 30%, #4596e6 50%, #7cc4fa);
}
.artboard {
  width: 1276px;
  height: 1400px;
  border: 2px solid #62d27b;
  padding: 28px 0 0 187px;
  color: #111;
  font-family: "Liberation Sans", sans-serif;
}
.measure {
  display: flex;
  align-items: center;
  justify-content: space-between;
  width: 897px;
  height: 61px;
  border: solid #c9c9c9;
  border-width: 0 2px;
  font-size: 9px;
  padding-bottom: 22px;
}
.measure i {
  width: 404px;
  height: 2px;
  background: #dedede;
}

/* wireframe page on the artboard */
.wireframe {
  position: relative;
  width: 897px;
  height: 1021px;
  margin-top: 11px;
}
.wf-header {
  height: 180px;
  padding: 67px 0 0 19px;
  background: #e3e1e2;
}
.wf-header h1 {
  font: 900 58px/76px Inter, "Liberation Sans", sans-serif;
  color: #000;
  -webkit-text-stroke: .8px #000;
}
.wf-nav {
  display: grid;
  grid-template-columns: 178px 200px 205px 173px 1fr;
  height: 50px;
  margin-top: 16px;
  padding-left: 21px;
  background: #e3e1e2;
  font: 900 17px/52px Inter, "Liberation Sans", sans-serif;
}
.wf-rule {
  height: 20px;
  background: repeating-linear-gradient(90deg, #f4f2f4 0 12px, transparent 12px 24px) 0 100% / 100% 2px no-repeat;
}
.wf-spot {
  display: flex;
  align-items: center;
  justify-content: center;
  width: 855px;
  height: 278px;
  margin: 21px 0 0 21px;
  padding: 0 2px 2px 0;
  background: #e3e1e2;
}
.wf-content {
  display: grid;
  grid-template-columns: 299px 298px 257px;
  height: 337px;
  padding-left: 21px;
}
.wf-content > div {
  position: relative;
  padding-top: 44px;
}
.wf-content h2 {
  font: bold 22px/28px "DejaVu Sans", sans-serif;
}
.wf-content p {
  display: flex;
  flex-direction: column;
  align-items: flex-start;
  margin-top: 9px;
  font-size: 15px;
  line-height: 20.950px;
  color: #222;
}
.wf-content .readmore {
  margin-top: 20.950px;
}
.note {
  position: absolute;
  width: 23px;
  height: 25px;
  border: 1.500px solid #666;
  border-radius: 50%;
  text-align: center;
  font: bold 17px/22px "DejaVu Sans", sans-serif;
}
.note.three {
  left: 246px;
  top: 117px;
}
.note.five {
  left: 125px;
  top: 248px;
}
.wf-content > .wf-shot {
  display: flex;
  align-items: center;
  justify-content: center;
  height: 218px;
  margin-top: 86px;
  padding: 0;
  background: #e3e1e2;
}
.wf-rule.low {
  height: 2px;
}
.wf-footer {
  display: flex;
  justify-content: space-between;
  align-items: flex-end;
  height: 101px;
  margin-top: 17px;
  padding: 0 21px 18px 21px;
  background: #e3e1e2;
  font-size: 11px;
  line-height: 16.400px;
}
.wf-footer address {
  display: flex;
  flex-direction: column;
  align-items: flex-start;
  font-style: normal;
}
.colgrid {
  position: absolute;
  inset: 0;
  display: grid;
  grid-template-columns: 260px 260px 260px;
  gap: 38.500px;
  padding: 18px 0 16px 18px;
  border: 2px solid #7cf8f6;
}
.colgrid i {
  border: 2px solid rgba(100, 248, 246, .8);
}
.notes {
  display: flex;
  flex-direction: column;
  align-items: flex-start;
  padding-top: 36px;
  font-size: 15px;
  line-height: 41.900px;
}
.notes h3 {
  font-size: 18px;
  line-height: 28px;
  margin-bottom: 3px;
}

/* palettes */
.dock {
  width: 339px;
  padding: 1px 0 0 13px;
  background: linear-gradient(90deg, #a9a7aa, #c4c2c5 7px, #cfcdd0 13px, #fff 14px);
}
.panels {
  height: 1254px;
  padding-top: 5px;
  background: #efedf0;
  border-top: 2px solid #d8d6d9;
  box-shadow: 0 4px 10px #888;
}
section {
  overflow: hidden;
  border-bottom: 1px solid #cfcdd0;
}
.tabs {
  display: flex;
  align-items: flex-end;
  position: relative;
  height: 42px;
  padding-left: 8px;
  background: linear-gradient(#eeecef, #d3d1d4);
  border-bottom: 2px solid #c2c0c3;
  font-size: 17.500px;
  color: #6c6c6c;
}
.tabs span {
  display: flex;
  align-items: center;
  height: 25px;
  padding-left: 10px;
  border: 2px solid #a5a3a6;
  border-bottom: 0;
  border-radius: 6px 6px 0 0;
  background: #d6d4d7;
  overflow: hidden;
}
.tabs .on {
  height: 27px;
  margin-bottom: -2px;
  padding-bottom: 2px;
  background: #efedf0;
  border-color: #bab8bb;
}
.tabs .on u:first-child {
  margin-left: -1px;
}
.tabs .cut {
  padding-left: 0;
  border-left: 0;
}
.tabs span + .cut {
  border-left: 1px solid #777;
}
.tabs s {
  width: 7px;
  height: 7px;
  margin: 0 9px 0 -2px;
  border: 1.500px solid #888;
  transform: rotate(45deg);
}
.tabs q {
  width: 11px;
  height: 11px;
  margin-left: 8px;
  background: linear-gradient(45deg, transparent 45%, #888 46%, #888 54%, transparent 55%), linear-gradient(-45deg, transparent 45%, #888 46%, #888 54%, transparent 55%);
}
.tabs .min {
  position: absolute;
  right: 0;
  top: 11px;
  width: 6px;
  height: 3px;
  background: #777;
}
.w61 { width: 61px; }
.w62 { width: 62px; }
.w73 { width: 73px; }
.w74 { width: 74px; }
.w83 { width: 83px; }
.w85 { width: 85px; }
.w89 { width: 89px; }
.w91 { width: 91px; }
.w94 { width: 94px; }
.w97 { width: 97px; }
.w103 { width: 103px; }
.w112 { width: 112px; }
.w124 { width: 124px; }
.w131 { width: 131px; }

.info {
  height: 126px;
}
.info .tabs {
  height: 39px;
}
.inforow {
  display: flex;
  align-items: center;
  height: 50px;
  margin-left: 9px;
  border-bottom: 2px solid #bcbabd;
}
.plus {
  width: 16px;
  height: 16px;
  margin: 4px 11px 0 9px;
}
.xy {
  display: grid;
  grid-template-columns: 35px 95px;
  width: 130px;
  height: 40px;
  line-height: 20px;
  border-right: 2px solid #aaa8ab;
}
.wh {
  width: 80px;
  border: 0;
}
.whicon {
  width: 18px;
  height: 18px;
  margin: 3px 12px 0 15px;
}
.infomore {
  width: 176px;
  height: 24px;
  margin-top: 5px;
  border-right: 2px solid #aaa8ab;
}
.align {
  height: 246px;
}
.align label {
  display: block;
  margin: 3px 0 0 8px;
  height: 21px;
  line-height: 21px;
  vertical-align: top;
}
.btns {
  display: flex;
  gap: 10px;
  height: 37px;
  padding-left: 9px;
  margin: 3px 0 0 -1px;
  border-bottom: 2px solid #bcbabd;
}
.btns > i {
  flex: none;
  width: 47.500px;
  height: 34px;
  border: 2px solid #aeacaf;
  background: #f1eff2;
}
.btns svg {
  width: 44px;
  height: 31px;
}
.spacing {
  display: flex;
}
.spacing .btns {
  border: 0;
  margin-top: 2px;
}
.spacing .btns .num {
  width: 121px;
  margin-top: 2px;
}
.toartboard {
  height: 52px;
  margin: 5px 0 0 10px;
  border-left: 2px solid #bcbabd;
}
.align .toartboard label {
  margin-top: -2px;
}
.toartboard div {
  display: flex;
  width: 60px;
  height: 35px;
  margin: 2px 0 0 18px;
  border: 2px solid #aaa8ab;
  background: #dddbde;
}
.toartboard svg {
  width: 31px;
  height: 31px;
  border-right: 1px solid #aaa;
}
.toartboard .down {
  width: 18px;
  border-left: 1px solid #aaa8ab;
}
.toartboard .down::after {
  border-width: 7px 4px 0;
  border-top-color: #444;
}
.character {
  height: 225px;
}
.font {
  display: flex;
  height: 28px;
  margin: 15px 0 0 18px;
}
.font + .font {
  margin-top: 9px;
}
.font .field {
  flex: none;
  width: 295px;
}
.font .arrow, .metrics .num:nth-child(4n) .arrow {
  border-radius: 0;
}
.metrics {
  display: grid;
  grid-template-columns: 32px 137px 31px 123px;
  row-gap: 5.500px;
  margin: 9px -20px 0 9px;
  padding: 10px 0 0 8px;
  border-top: 2px solid #bcbabd;
}
.metrics .num {
  width: 122px;
}
.metrics svg {
  width: 30px;
  height: 30px;
  font-family: "Liberation Serif", serif;
  fill: #222;
}
.metrics .sans {
  font-family: "Liberation Sans", sans-serif;
  fill: #444;
}
.layers {
  height: 245px;
}
.layers .tabs {
  margin-bottom: 3px;
}
.layer {
  display: flex;
  align-items: center;
  height: 34px;
  margin-left: 3px;
  border-bottom: 1px solid #dcdadd;
  background: #eff0f1;
  color: #555;
}
.layer:nth-child(2) {
  border-top: 2px solid #aaa;
}
.layer:nth-child(4) {
  height: 36px;
  border-bottom: 3px solid #666;
}
.layer .eye {
  width: 24px;
  height: 20px;
  margin: 0 5px 0 4px;
}
.layer .lock, .nolock {
  width: 20px;
  height: 22px;
  margin-right: 7px;
}
.nolock {
  border: solid #bbb;
  border-width: 2px 0 0 2px;
}
.layer b {
  width: 7px;
  height: 24px;
  background: #fb5054;
}
.layer.blue b {
  background: #4a86f5;
}
.layer em {
  align-self: stretch;
  width: 30px;
  margin-left: 6px;
  border-left: 3px solid #555;
  display: flex;
  align-items: center;
  padding-left: 7px;
}
.layer em::after {
  content: "";
  border: 8px solid transparent;
  border-left: 14px solid #888;
  border-right: 0;
}
.layer .thumb {
  width: 28px;
  height: 28px;
  margin-right: 7px;
  background: #fff;
  border: 2px solid #333;
}
.layer > span {
  margin-top: -3px;
}
.layer u {
  width: 17px;
  height: 17px;
  margin: 0 17px 0 auto;
  border: 2px solid #666;
  border-radius: 50%;
}
.layer.on {
  background: linear-gradient(90deg, #efedf0 103px, #bfd9fc 103px);
  font-weight: bold;
  color: #3a4560;
}
.foot {
  display: flex;
  height: 27px;
  margin: 63px 0 0 3px;
  border-top: 2px solid #bcbabd;
  background: #f3f1f4;
}
.foot span {
  width: 121px;
  line-height: 20px;
  padding-left: 15px;
}
.foot i {
  flex: none;
  width: 52.400px;
  height: 25px;
  border-left: 2px solid #c3c1c4;
  display: flex;
  align-items: center;
  justify-content: center;
}
.layers .foot svg {
  margin-left: 4px;
}
.foot svg {
  width: 26px;
  height: 22px;
}
.swatches {
  height: 195px;
}
.sw {
  display: flex;
  height: 23px;
  margin: 3px 0 0 3px;
}
.sw svg {
  width: 20px;
  height: 20px;
  margin: 1px 1px 0 1px;
}
.sw i {
  width: 23.700px;
  border-right: 2px solid #ccc;
}
.sw.top svg + svg {
  width: 24px;
  height: 22px;
  margin-right: 0;
  background: #fff;
}
.sw .white {
  background: #fff;
  border-color: #fff;
}
.sw.grays {
  width: 283px;
  height: 25px;
  margin-top: 0;
  border: 2px solid #444;
  border-left: 0;
}
.g0 { background: #000; }
.sw.top .g0 { border-color: #000; }
.g1 { background: #222; }
.g2 { background: #404040; }
.g3 { background: #585858; }
.g4 { background: #727272; }
.g5 { background: #8c8c8c; }
.g6 { background: #a2a2a2; }
.g7 { background: #b6b6b6; }
.g8 { background: #cbcbcb; }
.g9 { background: #dfdfdf; }
.g10 { background: #f0f0f0; }
.swatches .foot {
  margin-top: 70px;
}
.swatches .foot .first {
  border: 0;
  width: 50px;
}
.swatches .foot .gap {
  width: 18px;
}
.dim svg {
  opacity: .45;
}
.color {
  border: 0;
}
.mixer {
  display: flex;
  margin: 11px 0 0 12px;
}
.chips {
  width: 50px;
  height: 112px;
}
.sliders {
  display: grid;
  grid-template-columns: 28px 172px 54px;
  grid-auto-rows: 37px;
  align-items: center;
  margin-top: -2px;
  font-size: 14px;
}
.sliders b {
  font-weight: normal;
  padding-left: 6px;
}
.sliders i {
  height: 11px;
  border: 2px solid #aaa8ab;
}
.sliders em {
  height: 28px;
  margin-left: 10px;
  width: 54px;
  border: 2px solid #aaa8ab;
  background: #fff;
}
.spectrum {
  display: flex;
  height: 29px;
  margin: 10px 0 0 8px;
  border-top: 2px solid #444;
  background: #000;
}
.spectrum svg {
  width: 28px;
  height: 27px;
}
.spectrum i {
  width: 281px;
  background: linear-gradient(rgba(255, 255, 255, .45), transparent 40%, rgba(0, 0, 0, .1) 60%, #000), linear-gradient(90deg, #f00, #ff0 17%, #0e0 33%, #0ff 51%, #00f 66%, #f3f 84%, #f02);
}
.spectrum b {
  flex: 1;
  height: 13px;
  background: #fff;
}

/* address of the picture, read bottom to top */
.source {
  display: flex;
  justify-content: flex-end;
  align-items: center;
  width: 56px;
  height: 1030px;
  padding-right: 14px;
  font: 300 26px/34px Inter, Roboto, sans-serif;
  color: #444;
  background: #fff;
}
.source span {
  writing-mode: vertical-rl;
  transform: rotate(180deg);
}
```
